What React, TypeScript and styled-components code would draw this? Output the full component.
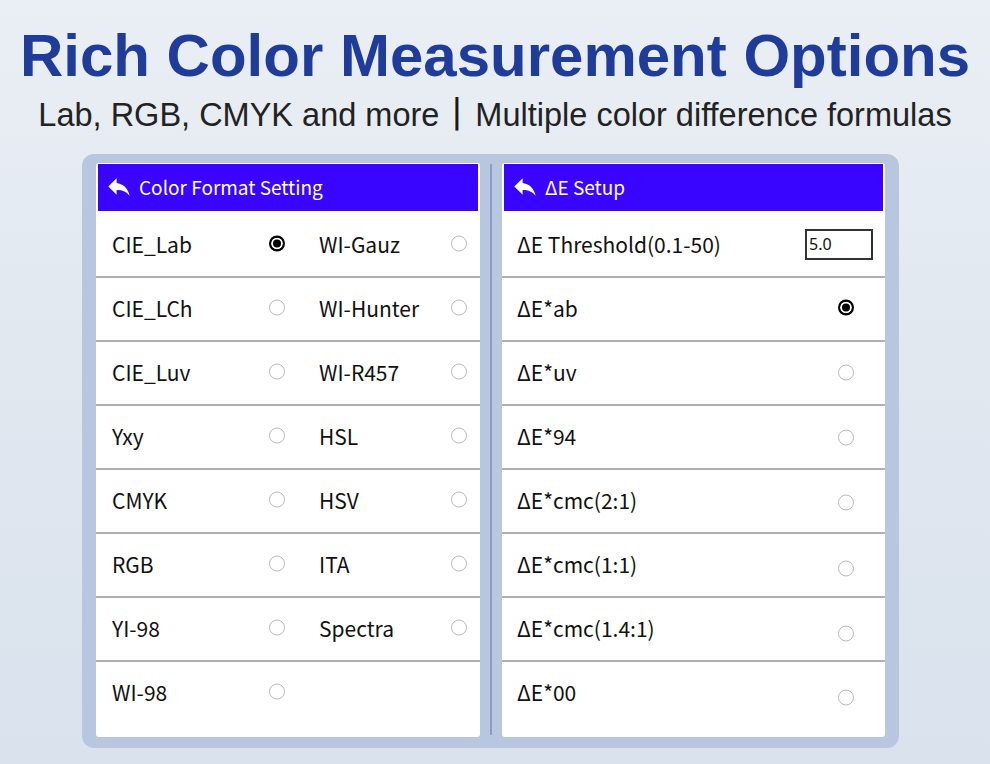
import React from 'react';
import styled, { createGlobalStyle } from 'styled-components';

const Global = createGlobalStyle`
  html, body { margin: 0; padding: 0; }
  body { background: #e3e9f1; }
`;

const Page = styled.div`
  width: 990px;
  height: 764px;
  overflow: hidden;
  display: flex;
  flex-direction: column;
  align-items: center;
  background: linear-gradient(180deg, #eaeff5 0%, #e2e8f0 45%, #d9e2ed 100%);
`;

const Title = styled.h1`
  margin: 0;
  padding-top: 26px;
  height: 60px;
  font: bold 60px/60px "Liberation Sans", Arial, sans-serif;
  color: #203c9b;
  white-space: nowrap;
`;

const Subtitle = styled.p`
  margin: 10px 0 0;
  font: 32.5px/32px "Liberation Sans", Arial, sans-serif;
  color: #222;
  white-space: nowrap;
`;

const Sep = styled.span`
  display: inline-block;
  width: 36px;
  text-align: center;
  font-family: "Noto Sans CJK SC", sans-serif;
  font-weight: 700;
  color: #1a1a1a;
  transform: scale(0.7, 1.1);
`;

const Frame = styled.div`
  align-self: flex-start;
  margin: 23px 0 0 82px;
  width: 817px;
  height: 594px;
  box-sizing: border-box;
  padding: 9px 14px 11px;
  background: #b9c6e0;
  border-radius: 12px;
  display: grid;
  grid-template-columns: 384px 22px 383px;
`;

const Divider = styled.div`
  justify-self: center;
  width: 2px;
  margin: 1px 0 2px;
  background: #8d9bcb;
`;

const Panel = styled.section`
  background: #fff;
  border-radius: 3px;
  padding-top: 1px;
  display: flex;
  flex-direction: column;
  font-family: "Noto Sans CJK SC", "Noto Sans", sans-serif;
  color: #111;
`;

const Header = styled.header`
  margin: 0 2px 3px;
  height: 47px;
  box-sizing: border-box;
  padding: 0 0 3px 10px;
  flex-shrink: 0;
  background: #3a05ff;
  color: #fff;
  display: flex;
  align-items: center;
  gap: 9px;
  font-size: 19px;
`;

const BackIcon = () => (
  <svg width="22" height="19" viewBox="3 4 18 16" fill="#fff" aria-hidden>
    <path d="M10 9V5l-7 7 7 7v-4.1c5 0 8.5 1.6 11 5.1-1-5-4-10-11-11z" />
  </svg>
);

const GridRow = styled.div<{ $last?: boolean }>`
  height: 62px;
  box-sizing: content-box;
  flex-shrink: 0;
  border-bottom: ${(p) => (p.$last ? '0' : '2px solid #b0b0b0')};
  display: grid;
  grid-template-columns: 173px 148px;
  column-gap: 34px;
  align-items: center;
  padding-left: 16px;
`;

const Cell = styled.div`
  display: flex;
  justify-content: space-between;
  align-items: center;
  font-size: 21px;
  transform: translateY(-1.5px);
`;

const ListRow = styled.div<{ $last?: boolean; $tight?: boolean }>`
  height: 62px;
  flex-shrink: 0;
  border-bottom: ${(p) => (p.$last ? '0' : '2px solid #b0b0b0')};
  display: flex;
  justify-content: space-between;
  align-items: center;
  padding: 0 ${(p) => (p.$tight ? 12 : 31)}px 0 15px;
  font-size: 21px;
`;

const Label = styled.span`
  transform: translateY(-1.5px);
`;

const Radio = styled.span<{ $on?: boolean; $shift?: number }>`
  display: block;
  width: 16px;
  height: 16px;
  box-sizing: border-box;
  border-radius: 50%;
  transform: translateY(${(p) => p.$shift || 0}px);
  ${(p) =>
    p.$on
      ? 'border: 2px solid #000; background: #000; box-shadow: inset 0 0 0 2px #fff;'
      : 'border: 1px solid #b8b8b8; background: #fff;'}
`;

const ValueBox = styled.div`
  width: 68px;
  height: 31px;
  box-sizing: border-box;
  border: 2px solid #333;
  padding-left: 2px;
  display: flex;
  align-items: center;
  font: 16px "Noto Sans", sans-serif;
  color: #111;
  transform: translateY(-1px);
`;

const formats: [string, string | null][] = [
  ['CIE_Lab', 'WI-Gauz'],
  ['CIE_LCh', 'WI-Hunter'],
  ['CIE_Luv', 'WI-R457'],
  ['Yxy', 'HSL'],
  ['CMYK', 'HSV'],
  ['RGB', 'ITA'],
  ['YI-98', 'Spectra'],
  ['WI-98', null],
];

const deltas: [string, number][] = [
  ['ΔE*ab', -1.5],
  ['ΔE*uv', -0.5],
  ['ΔE*94', 0.5],
  ['ΔE*cmc(2:1)', 1.5],
  ['ΔE*cmc(1:1)', 3.5],
  ['ΔE*cmc(1.4:1)', 4.5],
  ['ΔE*00', 4.5],
];

export default function App() {
  return (
    <Page>
      <Global />
      <Title>Rich Color Measurement Options</Title>
      <Subtitle>
        Lab, RGB, CMYK and more<Sep>丨</Sep>Multiple color difference formulas
      </Subtitle>
      <Frame>
        <Panel>
          <Header>
            <BackIcon />
            Color Format Setting
          </Header>
          {formats.map(([a, b], i) => (
            <GridRow key={a} $last={i === formats.length - 1}>
              <Cell>
                {a}
                <Radio $on={i === 0} />
              </Cell>
              {b ? (
                <Cell>
                  {b}
                  <Radio />
                </Cell>
              ) : (
                <span />
              )}
            </GridRow>
          ))}
        </Panel>
        <Divider />
        <Panel>
          <Header>
            <BackIcon />
            ΔE Setup
          </Header>
          <ListRow $tight>
            <Label>ΔE Threshold(0.1-50)</Label>
            <ValueBox>5.0</ValueBox>
          </ListRow>
          {deltas.map(([d, s], i) => (
            <ListRow key={d} $last={i === deltas.length - 1}>
              <Label>{d}</Label>
              <Radio $on={i === 0} $shift={s} />
            </ListRow>
          ))}
        </Panel>
      </Frame>
    </Page>
  );
}
